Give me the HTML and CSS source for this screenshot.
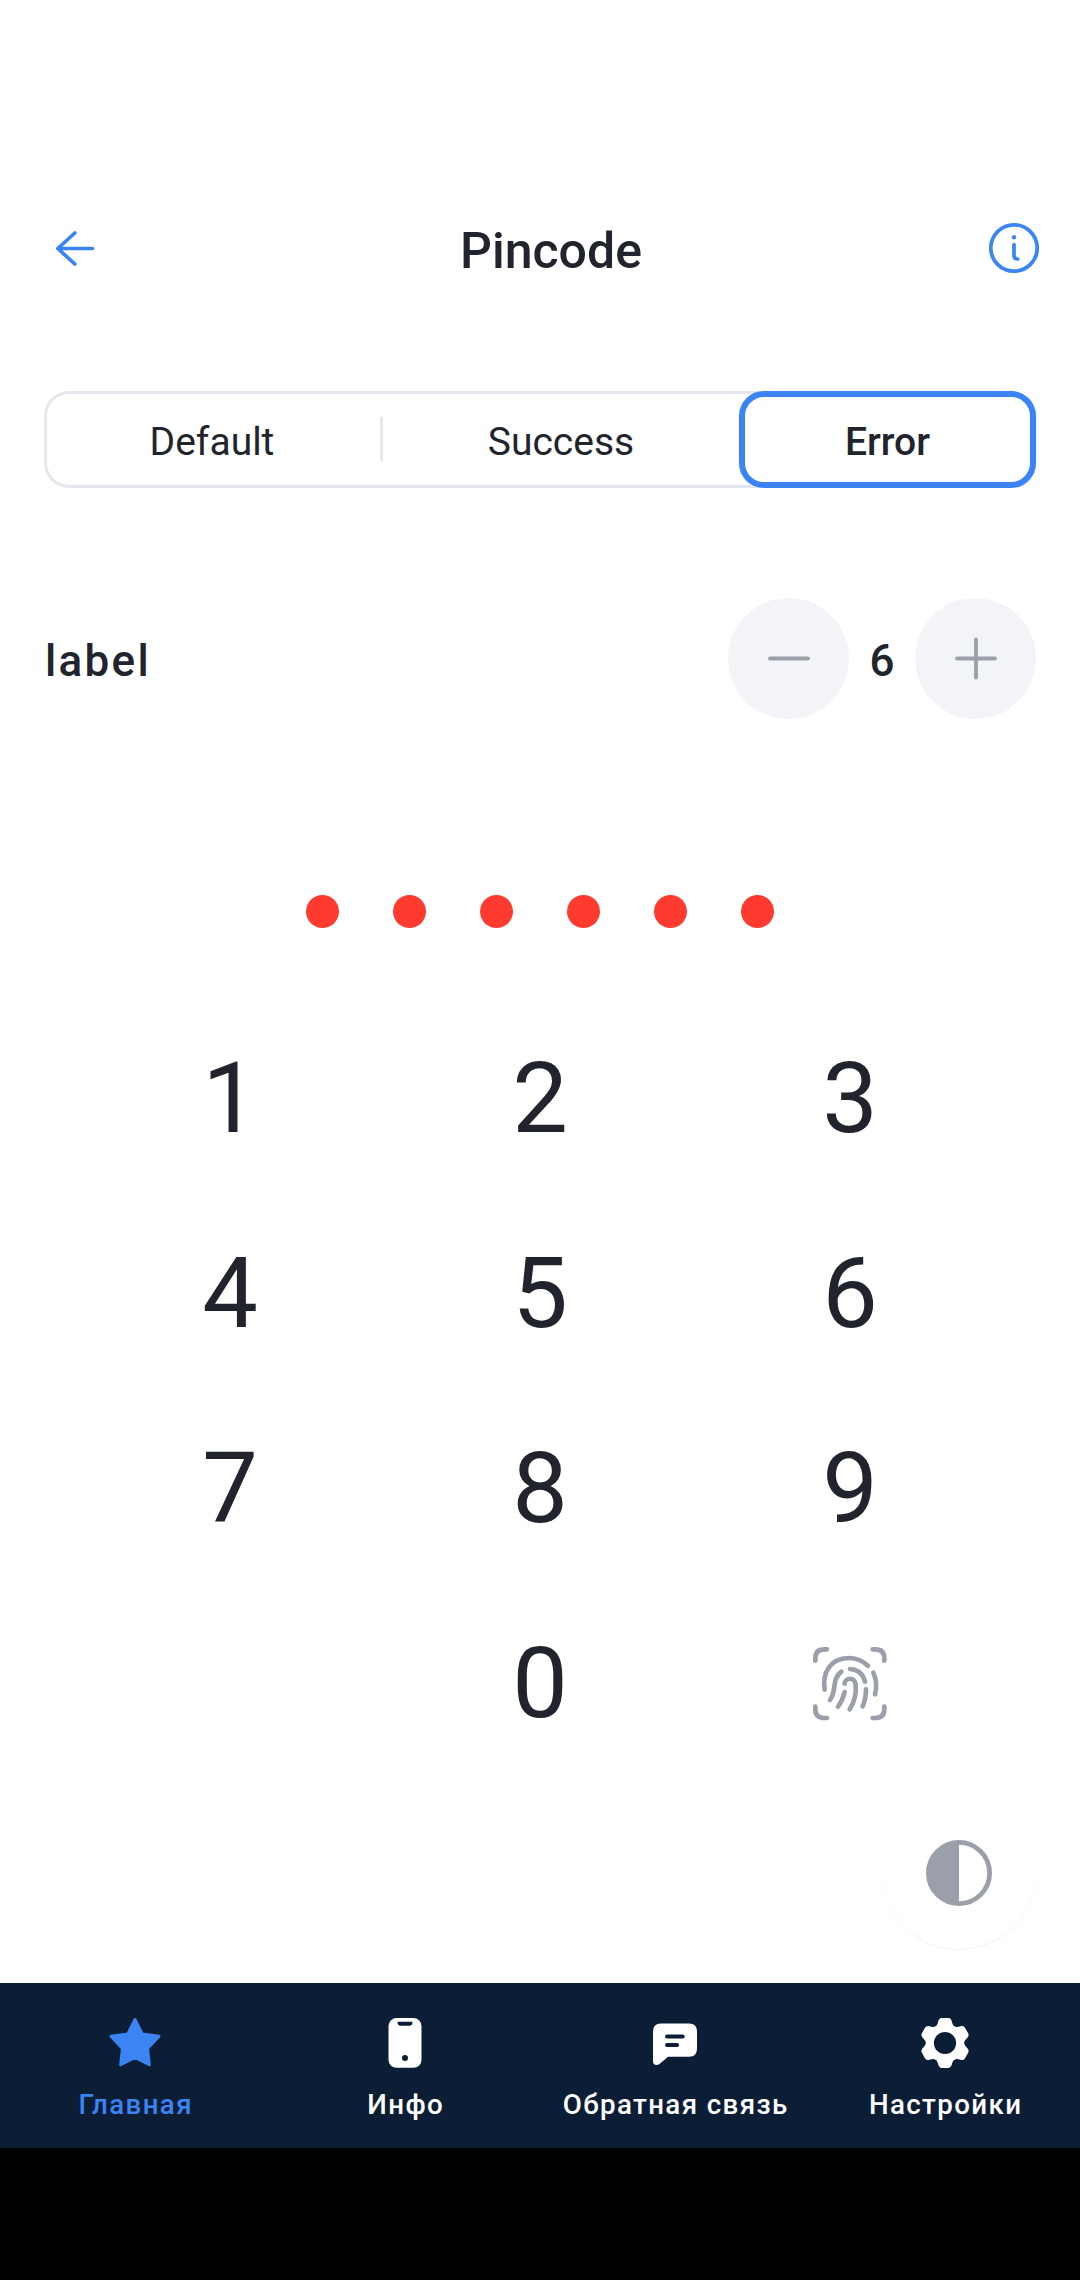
FILE: index.html
```html
<!DOCTYPE html>
<html lang="ru">
<head>
<meta charset="utf-8">
<title>Pincode</title>
<link rel="stylesheet" href="styles.css">
</head>
<body>
<div class="screen">
  <header class="header">
    <svg class="icon-blue" width="66" height="66" viewBox="0 0 66 66"><path d="M50.4 33.5H16M32.8 18 15.8 33.5l17 15.5"/></svg>
    <h1 class="title">Pincode</h1>
    <svg class="icon-blue" width="66" height="66" viewBox="0 0 66 66"><circle cx="33" cy="33" r="23.2"/><path d="M33 29.5V40.5q0 3.5 3.7 3.5"/><circle class="info-dot" cx="33" cy="22.2" r="2.2"/></svg>
  </header>

  <div class="segments">
    <div class="segment">Default</div>
    <div class="divider"></div>
    <div class="segment segment-wide">Success</div>
    <div class="segment segment-active">Error</div>
  </div>

  <div class="counter">
    <span class="counter-label">label</span>
    <div class="round"><svg width="66" height="66" viewBox="0 0 66 66"><path d="M14 32.5H52"/></svg></div>
    <span class="counter-value">6</span>
    <div class="round"><svg width="66" height="66" viewBox="0 0 66 66"><path d="M14 32.5H52M33 13.500V51.500"/></svg></div>
  </div>

  <div class="dots"><i></i><i></i><i></i><i></i><i></i><i></i></div>

  <div class="keypad">
    <div>1</div><div>2</div><div>3</div>
    <div>4</div><div>5</div><div>6</div>
    <div>7</div><div>8</div><div>9</div>
    <div></div><div>0</div>
    <div><svg class="finger" width="84" height="84" viewBox="84 64 252 252"><path d="M106 123v-7q0-27 27-27h8M278 89h8q27 0 27 27v7M313 261v7q0 27-27 27h-8M141 295h-8q-27 0-27-27v-7M134 210C126 160 150 116 206 115q33 0 58 23M280 159q14 33 5 65M184 156c-32 26-11 53-34 85M210 148q36 2 45 38M194 192c2-20 30-20 33 2q4 41-18 75M194 217q-6 25-20 44M258 209q0 28-10 51"/></svg></div>
  </div>

  <div class="fab"><svg width="66" height="66" viewBox="0 0 66 66"><circle cx="33" cy="33" r="30.6"/><path d="M33 2.5a30.5 30.5 0 0 0 0 61z"/></svg></div>

  <nav class="nav">
    <div class="nav-item nav-active">
      <svg width="66" height="66" viewBox="0 0 66 66"><path class="star" d="M33 9.500 40.300 24.100 57 26.300 45.600 38.400 47.300 54.700 33 47.300 18.700 54.700 20.400 38.400 9 26.300 25.700 24.100z"/></svg>
      <span>Главная</span>
    </div>
    <div class="nav-item">
      <svg width="66" height="66" viewBox="0 0 66 66"><rect x="16.5" y="8.1" width="33" height="49.7" rx="8"/><path class="cut" d="M25.6 11.700H40.400V12.700q0 3-3 3H28.600q-3 0-3-3z"/><circle class="cut" cx="33" cy="48" r="3"/></svg>
      <span>Инфо</span>
    </div>
    <div class="nav-item">
      <svg width="66" height="66" viewBox="0 0 66 66"><path d="M19 13.400H47q8 0 8 8V38.700q0 8-8 8H26L17.500 54C15 56 11 55.300 11 51.500V21.400q0-8 8-8z"/><path class="line" d="M25 26.600H40.700M25 35.100H35.100"/></svg>
      <span>Обратная связь</span>
    </div>
    <div class="nav-item">
      <svg width="66" height="66" viewBox="0 0 66 66"><defs><path id="tooth" d="M-10.700-16Q-8.200-16.500-7.300-19.800-6.300-24.900-3.400-24.900H3.400Q6.300-24.900 7.300-19.800 8.200-16.500 10.700-16z"/></defs><g transform="translate(33 33)"><circle r="18.900"/><use href="#tooth"/><use href="#tooth" transform="rotate(60)"/><use href="#tooth" transform="rotate(120)"/><use href="#tooth" transform="rotate(180)"/><use href="#tooth" transform="rotate(240)"/><use href="#tooth" transform="rotate(300)"/><circle class="cut" r="11.100"/></g></svg>
      <span>Настройки</span>
    </div>
  </nav>
  <div class="system-bar"></div>
</div>
</body>
</html>
```
FILE: styles.css
```css
* { box-sizing: border-box; }
body { margin: 0; background: #fff; font-family: Roboto, "Noto Sans", sans-serif; color: #22242d; }
svg { display: block; flex: none; }
.screen { position: relative; width: 1080px; height: 2280px; display: flex; flex-direction: column; overflow: hidden; }

.header { display: flex; align-items: center; height: 66px; margin-top: 215px; padding: 0 33px 0 42px; }
.title { flex: 1; margin: 0; padding: 5px 0 0 13px; text-align: center; font-size: 50px; line-height: 58px; font-weight: 500; }
.icon-blue { fill: none; stroke: #3b84f3; stroke-width: 3.7; stroke-linecap: round; stroke-linejoin: round; }
.info-dot { fill: #3b84f3; stroke: none; }

.segments { display: flex; align-items: center; height: 97px; margin: 110px 44px 0; border-radius: 25px; box-shadow: inset 0 0 0 3px #e4e7ee; font-size: 39px; }
.segment { width: 336px; padding-top: 4px; text-align: center; }
.segment-wide { width: 356px; }
.divider { width: 3px; height: 44px; margin-bottom: 2px; background: #e4e7ee; }
.segment-active { width: 297px; height: 97px; padding: 0; line-height: 90px; border: 6px solid #3b84f3; border-radius: 25px; background: #fff; font-weight: 500; }

.counter { display: flex; align-items: center; height: 121px; margin: 110px 44px 0; font-size: 44px; font-weight: 500; }
.counter-label { flex: 1; padding: 4px 0 0 1px; letter-spacing: 2.3px; }
.counter-value { width: 66px; padding-top: 4px; text-align: center; }
.round { display: flex; align-items: center; justify-content: center; width: 121px; height: 121px; border-radius: 50%; background: #f2f4f8; }
.round svg { fill: none; stroke: #9b9faa; stroke-width: 3.8; stroke-linecap: round; }

.dots { display: flex; justify-content: center; gap: 54px; margin-top: 176px; }
.dots i { width: 33px; height: 33px; border-radius: 50%; background: #ff3b30; }

.keypad { display: grid; grid-template-columns: repeat(3, 310px); grid-auto-rows: 195px; justify-content: center; margin-top: 72px; font-size: 99px; }
.keypad div { display: flex; align-items: center; justify-content: center; }
.finger { fill: none; stroke: #9b9faa; stroke-width: 14; stroke-linecap: round; stroke-linejoin: round; }

.fab { position: absolute; left: 882px; top: 1795px; width: 154px; height: 154px; padding-top: 2px; display: flex; align-items: center; justify-content: center; border-radius: 50%; background: #fff; box-shadow: 0 1px 1px #0000000d; }
.fab circle { fill: none; stroke: #9b9faa; stroke-width: 4.8; }
.fab path { fill: #9b9faa; }

.nav { display: grid; grid-template-columns: repeat(4, 1fr); height: 165px; margin-top: auto; background: #0c1d36; color: #fff; font-size: 27.7px; font-weight: 500; letter-spacing: 1.4px; }
.nav-item { display: flex; flex-direction: column; align-items: center; padding-top: 27px; white-space: nowrap; }
.nav-item span { line-height: 32px; margin-top: 13px; padding-left: 1.4px; }
.nav-item svg { fill: #fff; }
.nav-active { color: #3b84f3; }
.nav-item .star { fill: #3b84f3; stroke: #3b84f3; stroke-width: 3; stroke-linejoin: round; }
.nav-item .cut { fill: #0c1d36; }
.nav-item .line { stroke: #0c1d36; stroke-width: 4; stroke-linecap: round; }
.system-bar { height: 132px; background: #000; }
```
